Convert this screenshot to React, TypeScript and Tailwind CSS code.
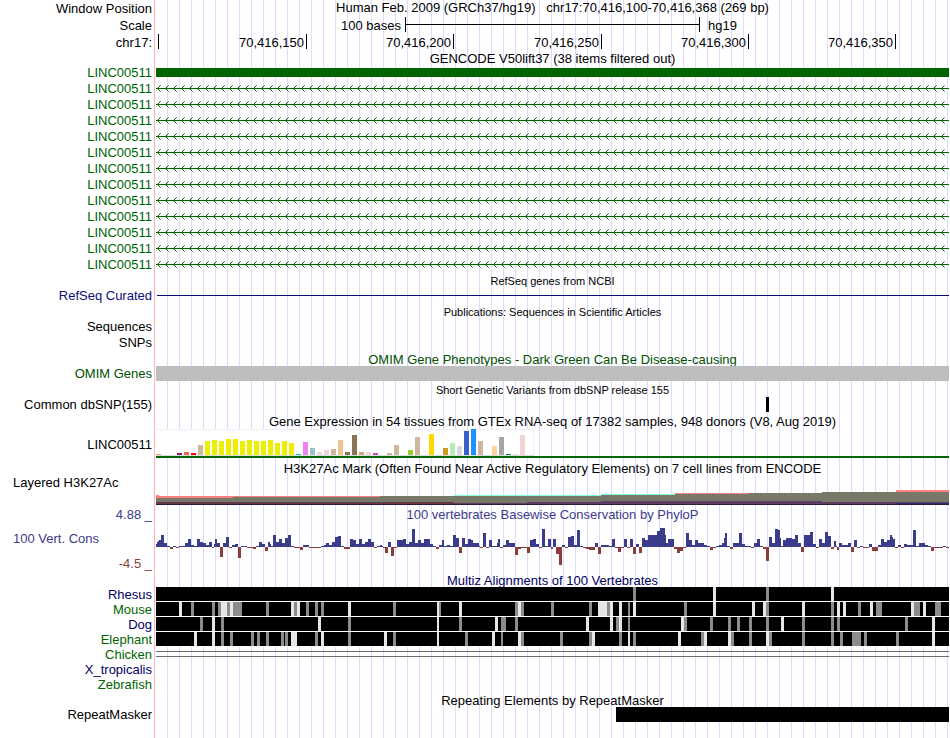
import clsx from "clsx";
import React from "react";

// width of the data area in chart units, one unit is one pixel at the default size
const WIDTH = 793;

const TICKS = ["70,416,150", "70,416,200", "70,416,250", "70,416,300", "70,416,350"];

// [slot, height, colour]
const TISSUES: [number, number, string][] = [
  [0, 1, "#ffa54f"],
  [3, 2, "#8b1c62"],
  [4, 3, "#ee6a50"],
  [5, 2, "#ff0000"],
  [6, 10, "#cdb79e"],
  [7, 14, "#eeee00"],
  [8, 15, "#eeee00"],
  [9, 14, "#eeee00"],
  [10, 16, "#eeee00"],
  [11, 16, "#eeee00"],
  [12, 14, "#eeee00"],
  [13, 15, "#eeee00"],
  [14, 14, "#eeee00"],
  [15, 14, "#eeee00"],
  [16, 15, "#eeee00"],
  [17, 12, "#eeee00"],
  [18, 14, "#eeee00"],
  [19, 12, "#eeee00"],
  [20, 1, "#00cdcd"],
  [21, 13, "#ee82ee"],
  [22, 7, "#9ac0cd"],
  [23, 3, "#eed5d2"],
  [24, 5, "#eed5d2"],
  [25, 6, "#cdb79e"],
  [26, 15, "#eec591"],
  [27, 3, "#8b7355"],
  [28, 20, "#8b7355"],
  [29, 3, "#cdaa7d"],
  [30, 3, "#eed5d2"],
  [31, 2, "#b452cd"],
  [33, 2, "#cdb79e"],
  [34, 10, "#cdb79e"],
  [36, 5, "#9acd32"],
  [37, 18, "#cdb79e"],
  [39, 21, "#ffd700"],
  [41, 7, "#cd9b1d"],
  [42, 12, "#b4eeb4"],
  [43, 9, "#d9d9d9"],
  [44, 24, "#3a5fcd"],
  [45, 26, "#1e90ff"],
  [46, 14, "#cdb79e"],
  [48, 9, "#ffd39b"],
  [49, 18, "#a6a6a6"],
  [50, 1, "#008b45"],
  [51, 1, "#eed5d2"],
  [52, 20, "#eed5d2"],
];

// [x, y, width, height, colour]
const H3K27AC: [number, number, number, number, string][] = [
  [0, 5, 3, 3, "#ff8080"],
  [3, 6, 74, 2, "#ff8080"],
  [77, 6, 147, 1, "#f08080"],
  [298, 5, 147, 1, "#80ffd8"],
  [445, 4, 74, 1, "#80ffd8"],
  [519, 3, 74, 1, "#ff8080"],
  [740, 0, 53, 2, "#ff8080"],
  [0, 8, 77, 6, "#787868"],
  [77, 7, 147, 7, "#787868"],
  [224, 6, 221, 7, "#787868"],
  [445, 5, 74, 8, "#787868"],
  [519, 4, 74, 9, "#787868"],
  [593, 3, 73, 10, "#787868"],
  [666, 2, 127, 10, "#787868"],
  [0, 12, 298, 1, "#583c60"],
  [0, 13, 298, 1, "#6c3838"],
  [298, 13, 73, 1, "#603c60"],
  [371, 12, 74, 2, "#603c68"],
  [445, 11, 221, 3, "#603c68"],
  [666, 12, 127, 2, "#603c60"],
  [740, 13, 53, 1, "#30306c"],
  [0, 14, 793, 1, "#301838"],
];

// runs of [width, score], below the axis when negative
const PHYLOP: [number, number][] = [
  [1, 3], [1, 5], [1, 6], [2, 7], [3, 12], [3, 4], [3, 1], [3, -2], [3, 1], [3, -1],
  [6, 1], [3, 4], [3, 8], [3, 2], [3, 1], [3, 8], [3, 5], [3, 4], [3, 2], [3, 5],
  [2, -1], [1, 3], [2, 8], [3, 4], [3, -10], [3, 4], [3, 10], [3, -1], [3, 2], [3, 3],
  [3, -11], [6, 1], [6, -1], [3, -2], [3, 1], [3, 5], [3, 3], [3, -4], [2, 5], [1, 3],
  [2, 1], [3, 12], [3, 5], [3, 8], [3, 4], [3, 9], [3, 12], [3, 1], [6, -1], [3, -3],
  [6, 2], [12, -1], [3, 1], [2, 2], [3, 4], [3, 2], [3, 5], [3, 10], [3, 11], [3, 1],
  [6, -2], [3, 8], [3, 7], [3, 3], [3, 8], [3, 3], [3, 5], [3, 8], [3, 5], [3, -1],
  [3, 1], [2, 2], [1, 1], [2, -1], [3, -6], [3, 5], [3, -9], [3, -1], [6, 7], [3, 8],
  [3, 3], [3, 5], [3, 18], [3, 4], [3, 7], [3, 4], [6, 8], [3, 3], [3, 1], [3, -2],
  [3, 2], [2, 7], [3, 1], [3, 2], [3, 1], [3, 12], [3, 9], [3, -6], [3, 9], [3, 3],
  [3, 8], [2, 7], [6, 4], [1, 1], [3, -1], [3, 14], [3, -1], [3, 7], [5, 1], [1, 4],
  [2, 8], [3, -1], [3, 2], [3, 7], [6, 4], [3, -8], [3, -2], [6, -1], [3, -6], [3, 7],
  [3, 8], [3, 3], [3, -1], [3, 18], [3, 1], [3, 8], [2, -2], [3, 8], [3, -7], [3, -18],
  [3, 2], [3, -1], [3, 10], [3, 11], [3, 2], [3, 17], [3, 1], [3, -1], [3, -2], [6, -3],
  [3, 4], [3, -7], [8, 2], [3, 1], [3, 8], [3, -1], [3, -5], [3, -1], [3, 8], [3, -1],
  [3, 8], [3, -7], [3, 3], [3, -6], [3, 9], [3, 7], [9, 12], [3, 16], [5, 19], [1, 12],
  [2, 4], [6, 8], [3, -2], [3, -6], [3, -4], [3, -1], [3, 14], [3, 7], [3, 2], [3, 7],
  [6, 4], [3, 2], [3, 1], [3, -3], [3, -1], [3, 1], [3, 2], [2, 4], [1, 9], [2, 14],
  [3, 1], [3, -2], [6, 4], [3, 14], [3, 3], [6, 1], [3, -1], [3, 4], [3, 8], [3, 1],
  [3, -2], [3, -14], [3, 10], [3, 4], [3, 18], [2, 17], [1, 9], [2, 1], [3, 7], [6, 9],
  [3, 8], [3, 12], [3, 4], [3, -5], [6, 12], [3, 15], [3, 3], [3, -1], [3, 8], [3, 4],
  [3, 15], [3, 11], [3, -2], [2, 6], [1, 1], [2, -3], [3, 4], [6, 2], [3, 4], [3, -5],
  [3, 7], [3, -1], [3, 1], [6, -1], [3, 3], [6, -4], [3, 2], [3, 8], [3, 5], [3, 7],
  [2, 12], [1, 10], [2, 8], [3, -1], [3, 2], [3, -1], [3, 3], [6, 2], [3, 17], [3, 1],
  [6, 4], [3, 2], [3, 1], [3, -4], [9, -1], [3, 1], [3, -1],
];

interface ISpecies {
  name: string;
  color: string;
  // [x, width] of weakly and of not aligned bases
  weak: [number, number][];
  gaps: [number, number][];
}

const SPECIES: ISpecies[] = [
  {
    name: "Rhesus",
    color: "text-[#000064]",
    weak: [[477, 3], [610, 3]],
    gaps: [[557, 3], [675, 3]],
  },
  {
    name: "Mouse",
    color: "text-[#006400]",
    weak: [
      [35, 3], [56, 3], [62, 3], [71, 3], [77, 9], [110, 3], [138, 3], [150, 3], [159, 3],
      [165, 3], [237, 3], [283, 2], [359, 3], [365, 3], [395, 3], [433, 3], [451, 3], [472, 2],
      [528, 3], [610, 3], [675, 3], [702, 3], [720, 6], [758, 6], [779, 6],
    ],
    gaps: [
      [23, 3], [65, 6], [74, 3], [135, 3], [141, 3], [192, 3], [281, 2], [303, 3], [362, 3],
      [442, 9], [454, 3], [463, 3], [477, 3], [557, 3], [596, 3], [607, 3], [646, 3], [681, 3],
      [687, 3], [714, 3], [755, 3], [767, 3],
    ],
  },
  {
    name: "Dog",
    color: "text-[#000064]",
    weak: [
      [44, 3], [65, 3], [192, 3], [303, 3], [345, 5], [359, 3], [460, 3], [472, 2], [528, 3],
      [554, 3], [572, 3], [581, 3], [593, 3], [610, 3], [646, 3], [675, 3], [681, 3], [749, 3],
    ],
    gaps: [
      [56, 3], [162, 3], [281, 2], [339, 3], [430, 3], [454, 3], [463, 3], [525, 3], [625, 3],
      [776, 3],
    ],
  },
  {
    name: "Elephant",
    color: "text-[#006400]",
    weak: [
      [65, 3], [74, 3], [95, 3], [101, 3], [110, 3], [125, 3], [129, 3], [159, 3], [192, 3],
      [237, 3], [309, 3], [345, 2], [365, 3], [404, 3], [433, 3], [463, 3], [477, 3], [545, 3],
      [575, 3], [593, 3], [613, 3], [646, 3], [675, 3], [684, 3], [696, 9], [708, 3], [740, 3],
    ],
    gaps: [
      [38, 3], [56, 3], [135, 6], [165, 3], [228, 3], [281, 2], [336, 3], [362, 3], [436, 3],
      [472, 2], [522, 3], [548, 3], [572, 3], [610, 3], [776, 3],
    ],
  },
];

interface ITrackProps {
  label?: React.ReactNode;
  className?: string;
  labelClassName?: string;
  children?: React.ReactNode;
}

const Track: React.FC<ITrackProps> = ({ label, className, labelClassName, children }) => (
  <div className={clsx("flex", className)}>
    <div className={clsx("w-[152px] shrink-0 text-right", labelClassName)}>{label}</div>
    <div className="ml-1 mr-px min-w-0 flex-1">{children}</div>
  </div>
);

interface ITitleProps {
  label?: string;
  className?: string;
  labelClassName?: string;
  children: React.ReactNode;
}

const Title: React.FC<ITitleProps> = ({ label, className, labelClassName, children }) => (
  <Track label={label} className={className} labelClassName={labelClassName}>
    <h2 className="text-center whitespace-pre">{children}</h2>
  </Track>
);

const Chart: React.FC<{ height: number; children: React.ReactNode }> = ({ height, children }) => (
  <svg
    className="block w-full"
    height={height}
    viewBox={`0 0 ${WIDTH} ${height}`}
    preserveAspectRatio="none"
    shapeRendering="crispEdges"
  >
    {children}
  </svg>
);

const Intron = () => (
  <svg className="block w-full" height={16} shapeRendering="crispEdges">
    <rect y={7} width="100%" height={1} fill="#006400" />
    <rect width="100%" height={16} fill="url(#strand)" />
  </svg>
);

const Conservation = () => {
  let x = 0;
  return (
    <Chart height={50}>
      {PHYLOP.map(([width, score], i) => {
        const start = x;
        x += width;
        return (
          <rect
            key={i}
            x={start}
            y={score > 0 ? 24 - score : 24}
            width={width}
            height={Math.abs(score)}
            fill={score > 0 ? "#3c3c8c" : "#8c3c3c"}
          />
        );
      })}
    </Chart>
  );
};

export default function App() {
  return (
    <main className="min-h-screen bg-[linear-gradient(90deg,#fff_0_154px,#ffb4b4_154px_155px,#fff_155px_167px,transparent_167px),repeating-linear-gradient(90deg,#fff_0_11px,#dcdcff_11px_12px)] font-['Liberation_Sans',Arial,sans-serif] text-[13px] leading-4 text-black">
      <svg className="absolute" width={0} height={0}>
        <defs>
          <pattern id="strand" width={8} height={16} patternUnits="userSpaceOnUse">
            <path d="M1 7h1v1h-1zM2 6h1v1h-1zM2 8h1v1h-1zM3 5h1v1h-1zM3 9h1v1h-1z" fill="#006400" />
            <path d="M4 4h1v1h-1zM4 10h1v1h-1z" fill="#006400" opacity={0.5} />
          </pattern>
        </defs>
      </svg>

      <Title label="Window Position" className="h-[17px]" labelClassName="leading-[18px]">
        {"Human Feb. 2009 (GRCh37/hg19)   chr17:70,416,100-70,416,368 (269 bp)"}
      </Title>
      <Track label="Scale" className="h-[17px] leading-[18px]">
        <div className="grid grid-cols-[249fr_295fr_249fr]">
          <span className="pr-1 text-right">100 bases</span>
          <div className="flex h-[15px] items-center border-x border-black">
            <div className="h-px w-full bg-black" />
          </div>
          <span className="pl-2">hg19</span>
        </div>
      </Track>
      <Track label="chr17:" className="h-[17px] leading-[18px]">
        <div className="grid grid-cols-[3fr_148fr_147fr_148fr_147fr_147fr_53fr]">
          <span className="h-[15px] border-r border-black" />
          {TICKS.map((tick) => (
            <span key={tick} className="h-[15px] border-r border-black pr-0.5 text-right">
              {tick}
            </span>
          ))}
        </div>
      </Track>

      <Title className="h-[14px]">GENCODE V50lift37 (38 items filtered out)</Title>
      <Track label="LINC00511" className="h-4" labelClassName="text-[#006400]">
        <div className="mt-[3px] h-[9px] bg-[#006400]" />
      </Track>
      {Array.from({ length: 12 }, (_, i) => (
        <Track key={i} label="LINC00511" className="h-4" labelClassName="text-[#006400]">
          <Intron />
        </Track>
      ))}

      <Title className="h-[15px] text-[11px]">RefSeq genes from NCBI</Title>
      <Track label="RefSeq Curated" className="h-4" labelClassName="text-[#0c0c78]">
        <div className="mt-[7px] ml-px h-px bg-[#0c0c78]" />
      </Track>

      <Title className="h-[15px] text-[11px]">
        Publications: Sequences in Scientific Articles
      </Title>
      <Track label="Sequences" className="h-4" />
      <Track label="SNPs" className="h-4" />

      <Title className="h-[15px] leading-[18px] text-[#005000]">
        OMIM Gene Phenotypes - Dark Green Can Be Disease-causing
      </Title>
      <Track label="OMIM Genes" className="h-[15px]" labelClassName="text-[#005000]">
        <div className="h-[15px] bg-[#bebebe]" />
      </Track>

      <Title className="h-4 text-[11px] leading-[18px]">
        Short Genetic Variants from dbSNP release 155
      </Title>
      <Track label="Common dbSNP(155)" className="h-[15px]">
        <Chart height={15}>
          <rect x={610} width={3} height={15} />
        </Chart>
      </Track>

      <Title className="h-[17px] leading-5">
        Gene Expression in 54 tissues from GTEx RNA-seq of 17382 samples, 948 donors (V8, Aug 2019)
      </Title>
      <Track label="LINC00511" className="h-[30px]" labelClassName="leading-8">
        <Chart height={30}>
          <rect width={378} height={27} fill="#f0f0f0" />
          <rect y={1} width={377} height={25} fill="#fff" />
          <rect y={26} width={378} height={1} fill="#dcdcdc" />
          {TISSUES.map(([slot, height, color]) => (
            <rect key={slot} x={slot * 7} y={26 - height} width={5} height={height} fill={color} />
          ))}
          <rect y={27} width={WIDTH} height={2} fill="#006400" />
        </Chart>
      </Track>

      <Title className="h-[17px] leading-5">
        H3K27Ac Mark (Often Found Near Active Regulatory Elements) on 7 cell lines from ENCODE
      </Title>
      <Track
        label="Layered H3K27Ac"
        className="h-[30px]"
        labelClassName="pl-[13px] text-left! leading-[14px]"
      >
        <div className="pt-[14px]">
          <Chart height={15}>
            {H3K27AC.map(([x, y, width, height, color], i) => (
              <rect key={i} x={x} y={y} width={width} height={height} fill={color} />
            ))}
          </Chart>
        </div>
      </Track>

      <Title label="4.88 _" className="h-[17px] leading-[18px] text-[#3c3c8c]">
        100 vertebrates Basewise Conservation by PhyloP
      </Title>
      <Track
        className="h-[50px]"
        label={
          <div className="flex h-full flex-col justify-between pt-2 pb-px">
            <span className="pl-[13px] text-left text-[#3c3c8c]">100 Vert. Cons</span>
            <span className="text-[#8c3c3c]">-4.5 _</span>
          </div>
        }
      >
        <Conservation />
      </Track>

      <Title className="h-[14px] text-[#000064]">Multiz Alignments of 100 Vertebrates</Title>
      {SPECIES.map(({ name, color, weak, gaps }) => (
        <Track key={name} label={name} className="h-[15px]" labelClassName={color}>
          <Chart height={15}>
            <rect width={WIDTH} height={15} fill="#fff" />
            <rect width={WIDTH} height={14} />
            {weak.map(([x, width]) => (
              <rect key={x} x={x} width={width} height={14} fill="#8c8c8c" />
            ))}
            {gaps.map(([x, width]) => (
              <rect key={x} x={x} width={width} height={14} fill="#e6e6e6" />
            ))}
          </Chart>
        </Track>
      ))}
      <Track label="Chicken" className="h-[15px]" labelClassName="text-[#006400]">
        <div className="mt-1 h-[6px] border-y border-[#6e6e6e]" />
      </Track>
      <Track label="X_tropicalis" className="h-[15px]" labelClassName="text-[#000064]" />
      <Track label="Zebrafish" className="h-[15px]" labelClassName="text-[#006400]" />

      <Title className="h-[15px] leading-[18px]">Repeating Elements by RepeatMasker</Title>
      <Track label="RepeatMasker" className="h-[15px]">
        <Chart height={15}>
          <rect x={460} width={333} height={15} />
        </Chart>
      </Track>
    </main>
  );
}
